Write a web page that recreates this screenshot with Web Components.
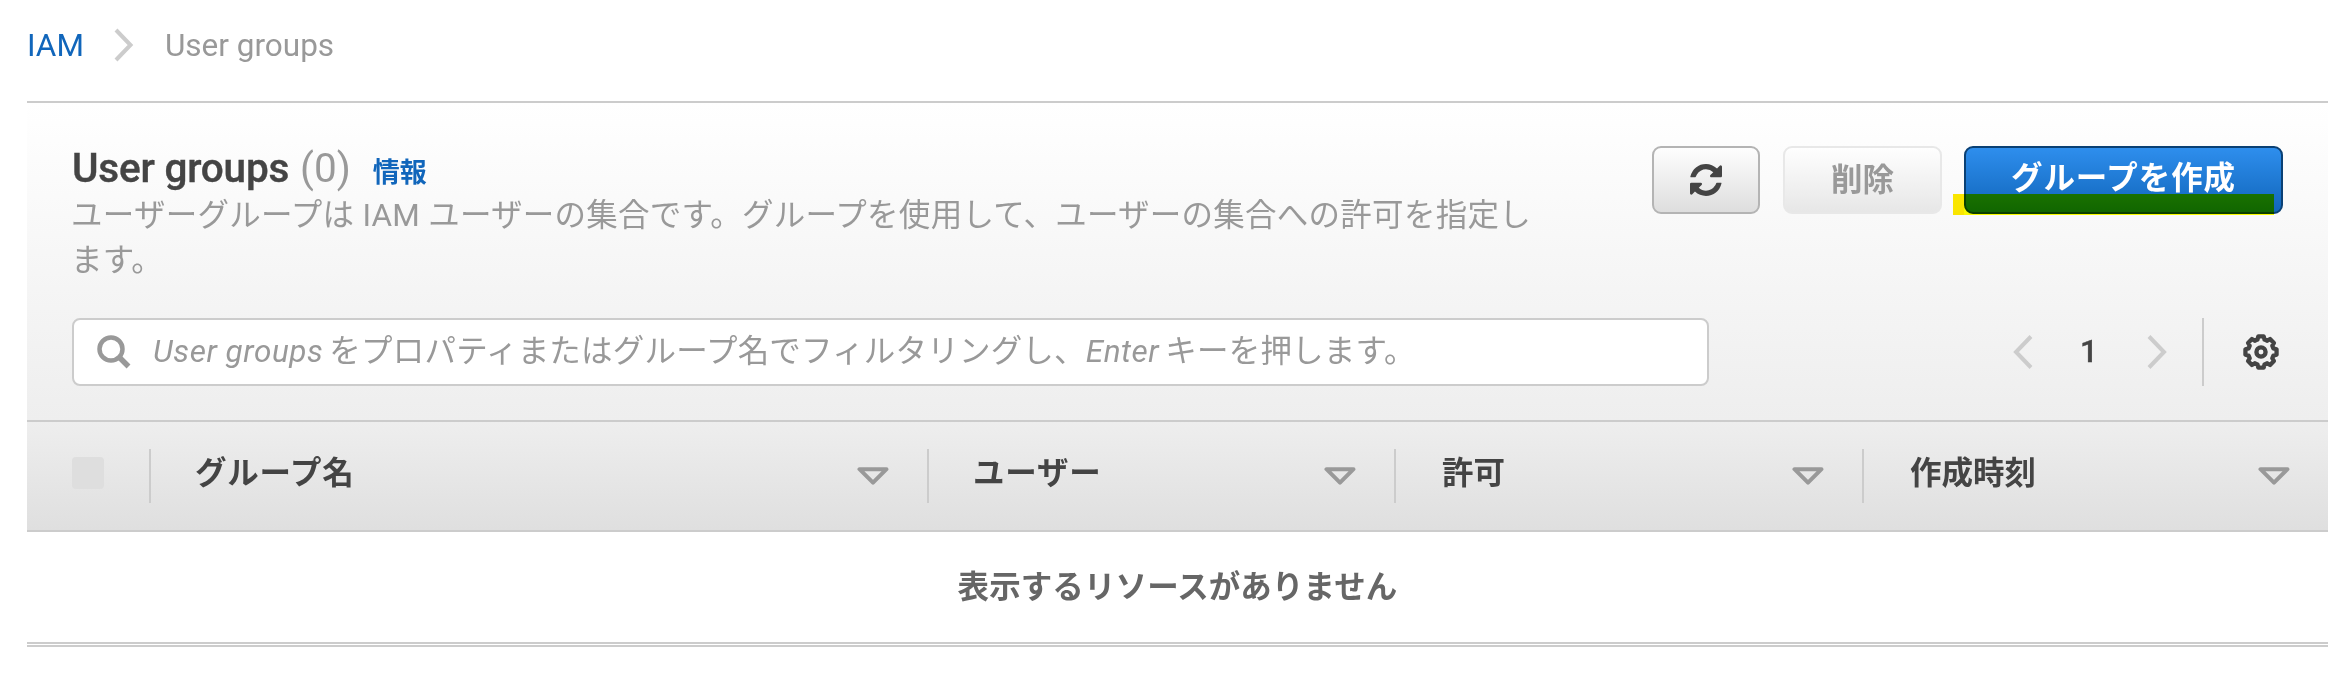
<!DOCTYPE html>
<html lang="ja">
<head>
<meta charset="utf-8">
<title>User groups</title>
<style>
html,body{margin:0;background:#fff}
body{width:2340px;height:684px;overflow:hidden;font-family:Roboto,"Noto Sans CJK JP",sans-serif;font-size:31.5px;line-height:45px;color:#444}
</style>
</head>
<body>
<iam-page></iam-page>
<script>
const define = (name, html) => {
  const t = document.createElement('template');
  t.innerHTML = html;
  customElements.define(name, class extends HTMLElement {
    constructor(){ super(); this.attachShadow({mode:'open'}).append(t.content.cloneNode(true)); }
  });
};

define('iam-breadcrumb', `<style>
:host{display:flex;align-items:center;height:90px;color:#999}
a{color:#1166bb;text-decoration:none}
svg{display:block;margin:0 31px 0 30px}
</style><a><slot name="root"></slot></a>
<svg width="20" height="34" viewBox="0 0 20 34" fill="none" stroke="#ccc" stroke-width="4"><path d="M2 2 16.500 17 2 32"/></svg>
<span><slot></slot></span>`);

define('iam-button', `<style>
:host{display:flex;align-items:center;justify-content:center;box-sizing:border-box;height:68px;border:2px solid #b4b4b4;border-radius:9px;background:linear-gradient(#fff,#ddd);background-origin:border-box;font-weight:700;white-space:nowrap}
:host([kind=disabled]){border-color:#e8e8e8;color:#999;background:linear-gradient(#fff,#e6e6e6);background-origin:border-box}
:host([kind=primary]){border-color:#0a4074;color:#fff;letter-spacing:.9px;padding-bottom:3px;background:linear-gradient(#2e8eed,#1166bb)}
</style><slot></slot>`);

define('iam-search', `<style>
:host{display:flex;align-items:center;box-sizing:border-box;width:1637px;height:68px;border:2px solid #ccc;border-radius:8px;background:#fff;padding-left:23px;color:#999;white-space:nowrap;letter-spacing:.2px;word-spacing:-2px}
svg{flex:none;margin-right:22px}
div{margin-top:-2px}
::slotted(i){letter-spacing:.55px;word-spacing:0}
</style><svg width="34" height="34" viewBox="0 0 34 34" fill="none" stroke="#999" stroke-width="4.500"><circle cx="14" cy="14" r="11.500"/><path d="M22 22 31.500 31.500" stroke-width="5.500"/></svg><div><slot></slot></div>`);

define('iam-pager', `<style>
:host{display:flex;align-items:center;height:68px}
span{font-weight:500;width:20px;text-align:center;margin-top:-2px;-webkit-text-stroke:.4px #444}
.p{margin-right:46px}.n{margin-left:48px}
.bar{width:2px;height:68px;background:#ccc;margin:0 39px 0 35px}
svg{display:block;flex:none}
</style>
<svg class="p" width="20" height="36" viewBox="0 0 20 36" fill="none" stroke="#ccc" stroke-width="4"><path d="M18 2.500 3 18 18 33.500"/></svg>
<span><slot></slot></span>
<svg class="n" width="20" height="36" viewBox="0 0 20 36" fill="none" stroke="#ccc" stroke-width="4"><path d="M2 2.500 17 18 2 33.500"/></svg>
<div class="bar"></div>
<svg width="36" height="36" viewBox="-18 -18 36 36" fill="none" stroke="#444" stroke-width="4.300" stroke-linejoin="round"><path id="g"/><circle r="4.600"/></svg>`);

define('iam-column', `<style>
:host{display:flex;align-items:center;box-sizing:border-box;height:54px;border-left:2px solid #ccc;padding:0 38px 0 46px;justify-content:space-between;font-weight:700;color:#444}
:host([kana]){letter-spacing:.8px;padding-left:44px}
span{margin-top:-5px}
svg{display:block}
</style><span><slot></slot></span>
<svg width="32" height="18" viewBox="0 0 32 18" fill="none" stroke="#999" stroke-width="4" stroke-linejoin="round"><path d="M2.500 2.200H29.500L16 15.600Z"/></svg>`);

define('iam-table', `<style>
:host{display:block}
.head{display:grid;grid-template-columns:122px 778px 467px 468px 466px;align-items:center;box-sizing:border-box;height:112px;border-top:2px solid #ccc;border-bottom:2px solid #ccc;background:linear-gradient(#eee,#dfdfdf)}
.check{width:32px;height:32px;margin:0 0 6px 45px;border-radius:4px;background:#dedede}
.empty{height:110px;display:flex;align-items:center;justify-content:center;font-weight:700;color:#666;letter-spacing:.1px}
.foot{height:1px;border:solid #ccc;border-width:2px 0}
</style><div class="head"><div class="check"></div><slot></slot></div>
<div class="empty"><slot name="empty"></slot></div><div class="foot"></div>`);

define('iam-page', `<style>
:host{display:block;padding:0 12px 0 27px}
iam-breadcrumb{margin-bottom:11px}
.top{box-sizing:border-box;height:319px;border-top:2px solid #ccc;background:linear-gradient(#fff,#eee);padding:43px 45px 0;display:flex;flex-direction:column;justify-content:flex-start}
.row{display:flex;justify-content:space-between;align-items:flex-start;height:172px}
.title{display:flex;align-items:baseline;height:45px;line-height:45px}
h1{margin:0;font-size:40.5px;font-weight:500;letter-spacing:-.2px;-webkit-text-stroke:.4px #444}
.count{font-size:40.500px;color:#999;margin-left:11px}
.info{font-size:27px;font-weight:700;color:#1166bb;margin-left:22px}
p{margin:2px 0 0 -1px;width:1470px;color:#999;letter-spacing:.26px}
.actions{display:flex}
.wrap{position:relative}
.mark{position:absolute;left:-11px;top:48px;width:321px;height:20.500px;background:linear-gradient(90deg,#ffeb00 11px,#ffff00 11px);mix-blend-mode:multiply}
</style>
<iam-breadcrumb><span slot="root">IAM</span>User groups</iam-breadcrumb>
<section class="top">
 <div class="row">
  <div><div class="title"><h1>User groups</h1><span class="count">(0)</span><span class="info">情報</span></div>
  <p>ユーザーグループは IAM ユーザーの集合です。グループを使用して、ユーザーの集合への許可を指定します。</p></div>
  <div class="actions">
   <iam-button style="width:108px;margin-right:23px"><svg width="32" height="32" viewBox="0 0 1536 1536" fill="#444"><path d="M1511 928q0 5-1 7-64 268-268 434.500T764 1536q-146 0-282.500-55T238 1324l-129 129q-19 19-45 19t-45-19-19-45V960q0-26 19-45t45-19h448q26 0 45 19t19 45-19 45l-137 137q71 66 161 102t187 36q134 0 250-65t186-179q11-17 53-117 8-23 30-23h192q13 0 22.500 9.500t9.500 22.500zm25-800v448q0 26-19 45t-45 19h-448q-26 0-45-19t-19-45 19-45l138-138Q969 256 768 256q-134 0-250 65T332 500q-11 17-53 117-8 23-30 23H50q-13 0-22.500-9.500T18 608v-7q65-268 270-434.500T768 0q146 0 284 55.500T1297 212l130-129q19-19 45-19t45 19 19 45z"/></svg></iam-button>
   <iam-button kind="disabled" style="width:159px;margin-right:22px">削除</iam-button>
   <div class="wrap"><iam-button kind="primary" style="width:319px">グループを作成</iam-button><div class="mark"></div></div>
  </div>
 </div>
 <div class="row" style="height:68px">
  <iam-search><i>User groups</i> をプロパティまたはグループ名でフィルタリングし、<i>Enter</i> キーを押します。</iam-search>
  <iam-pager style="margin-right:4px">1</iam-pager>
 </div>
</section>
<iam-table><iam-column kana>グループ名</iam-column><iam-column kana>ユーザー</iam-column><iam-column>許可</iam-column><iam-column>作成時刻</iam-column><span slot="empty">表示するリソースがありません</span></iam-table>`);

/* gear outline: eight teeth around the centre */
const pager = document.querySelector('iam-page').shadowRoot.querySelector('iam-pager').shadowRoot;
let d = '';
for (let i = 0; i < 8; i++) {
  [[-10,15.8],[10,15.8],[16,12.9],[29,12.9]].forEach(([a, r], k) => {
    const t = (i * 45 + a - 90) * Math.PI / 180;
    d += (i + k ? 'L' : 'M') + (r * Math.cos(t)).toFixed(2) + ' ' + (r * Math.sin(t)).toFixed(2);
  });
}
pager.getElementById('g').setAttribute('d', d + 'Z');
</script>
</body>
</html>
